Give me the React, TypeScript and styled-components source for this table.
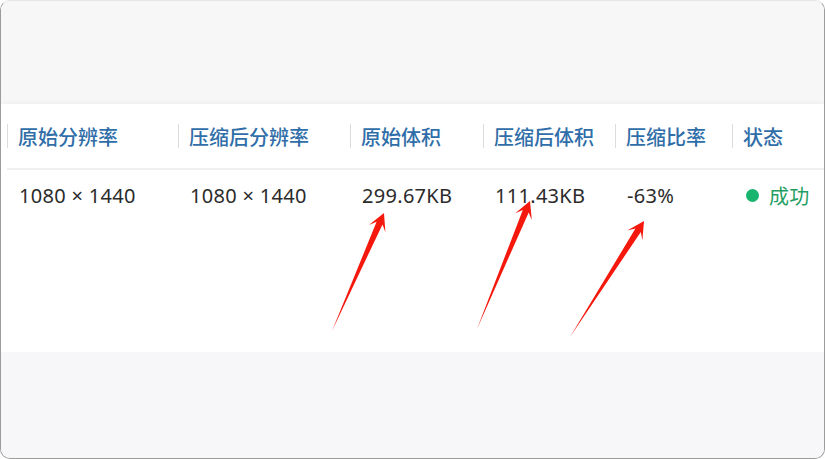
import React from "react";
import styled, { createGlobalStyle } from "styled-components";

const Global = createGlobalStyle`
  html, body { margin: 0; padding: 0; background: #ffffff; }
  body { font-family: "Noto Sans", "Noto Sans CJK SC", sans-serif; }
`;

const Frame = styled.div`
  position: relative;
  width: 825px;
  height: 459px;
  box-sizing: border-box;
  border: 1px solid #9c9c9c;
  border-top-color: #e6e6e6;
  border-radius: 10px;
  overflow: hidden;
  display: flex;
  flex-direction: column;
  background: #f7f7f7;
`;

const TopBand = styled.div`
  height: 103px;
  background: #f7f7f7;
`;

const TablePanel = styled.div`
  height: 248px;
  background: #ffffff;
  box-shadow: 0 -2px 4px rgba(0, 0, 0, 0.03);
  display: flex;
  flex-direction: column;
  padding-left: 6px;
`;

const BottomBand = styled.div`
  flex: 1;
  background: #f7f6f9;
`;

const Row = styled.div<{ $header?: boolean }>`
  display: grid;
  grid-template-columns: 171px 172px 133px 132px 117px 1fr;
  height: ${(p) => (p.$header ? "64px" : "50px")};
  align-items: center;
  border-bottom: ${(p) => (p.$header ? "2px solid #efefef" : "none")};
`;

const HeadCell = styled.div`
  position: relative;
  padding-left: 11px;
  font-size: 20px;
  font-weight: 500;
  color: #2f6ea8;
  white-space: nowrap;
  &::before {
    content: "";
    position: absolute;
    left: 0;
    top: 50%;
    transform: translateY(-50%);
    width: 1px;
    height: 24px;
    background: #dcdcdc;
  }
`;

const Cell = styled.div`
  padding-left: 12px;
  font-size: 20px;
  letter-spacing: 0.3px;
  color: #2b2b2b;
  white-space: nowrap;
  display: flex;
  align-items: center;
`;

const Status = styled.span`
  color: #1f9e62;
  font-size: 20px;
  display: inline-flex;
  align-items: center;
  gap: 10px;
  margin-left: 2px;
`;

const Dot = styled.span`
  width: 13px;
  height: 13px;
  border-radius: 50%;
  background: #19b46e;
  display: inline-block;
`;

const Overlay = styled.svg`
  position: absolute;
  left: 0;
  top: 0;
  pointer-events: none;
`;

type Pt = [number, number];

function arrowPoints(tail: Pt, tip: Pt): string {
  const dx = tip[0] - tail[0];
  const dy = tip[1] - tail[1];
  const len = Math.hypot(dx, dy);
  const u: Pt = [dx / len, dy / len];
  const n: Pt = [-u[1], u[0]];
  const at = (back: number, side: number): Pt => [
    tip[0] - u[0] * back + n[0] * side,
    tip[1] - u[1] * back + n[1] * side,
  ];
  const pts: Pt[] = [
    tail,
    at(11, 3.2),
    at(17, 9),
    tip,
    at(17, -9),
    at(11, -3.2),
  ];
  return pts.map((p) => `${p[0].toFixed(1)},${p[1].toFixed(1)}`).join(" ");
}

const arrows: { tail: Pt; tip: Pt }[] = [
  { tail: [331, 330], tip: [383, 212] },
  { tail: [476, 328], tip: [529, 200] },
  { tail: [569, 336], tip: [643, 220] },
];

const headers = ["原始分辨率", "压缩后分辨率", "原始体积", "压缩后体积", "压缩比率", "状态"];

export default function App() {
  return (
    <>
      <Global />
      <Frame>
        <TopBand />
        <TablePanel>
          <Row $header>
            {headers.map((h) => (
              <HeadCell key={h}>{h}</HeadCell>
            ))}
          </Row>
          <Row>
            <Cell>1080 × 1440</Cell>
            <Cell>1080 × 1440</Cell>
            <Cell>299.67KB</Cell>
            <Cell>111.43KB</Cell>
            <Cell>-63%</Cell>
            <Cell>
              <Status>
                <Dot />
                成功
              </Status>
            </Cell>
          </Row>
        </TablePanel>
        <BottomBand />
        <Overlay width="825" height="459" viewBox="0 0 825 459">
          {arrows.map((a, i) => (
            <polygon key={i} points={arrowPoints(a.tail, a.tip)} fill="#f5180c" />
          ))}
        </Overlay>
      </Frame>
    </>
  );
}
